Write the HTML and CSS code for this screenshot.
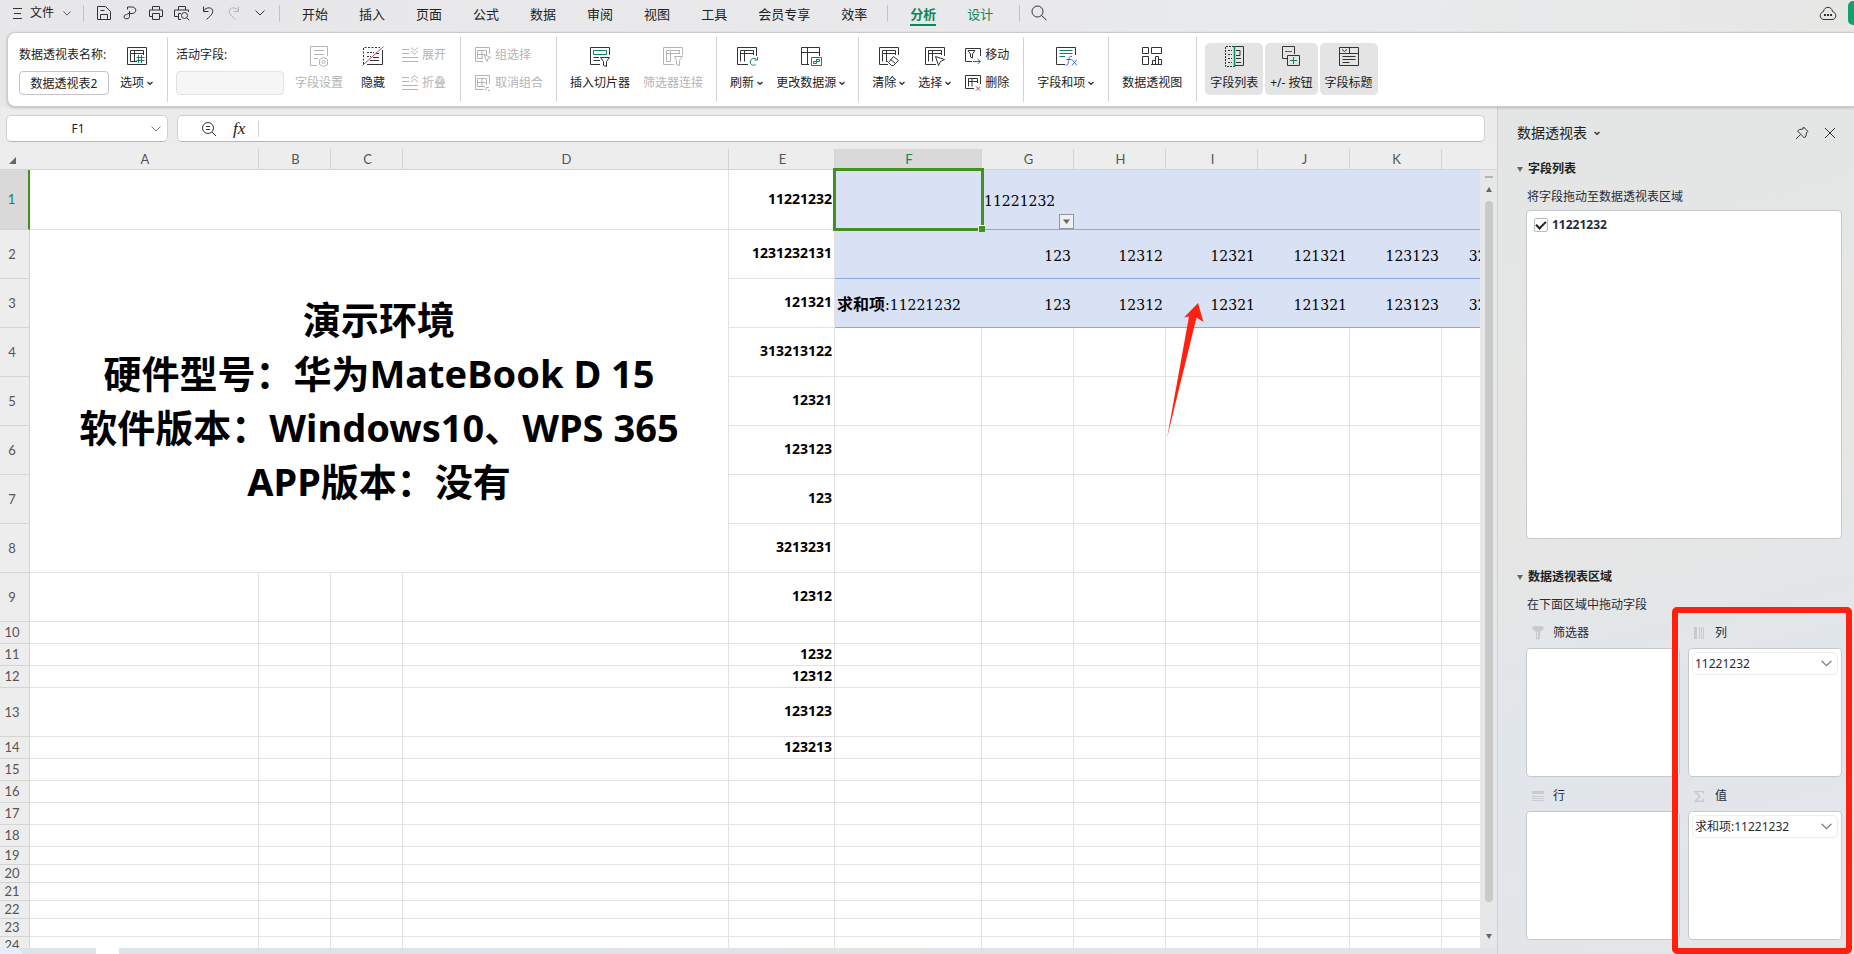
FILE: index.html
```html
<!DOCTYPE html>
<html lang="zh-CN">
<head>
<meta charset="utf-8">
<title>数据透视表</title>
<link rel="stylesheet" href="styles.css">
</head>
<body>
<svg class="defs" aria-hidden="true">
  <symbol id="chev" viewBox="0 0 6 6"><path d="M.5 2 3 4.300 5.500 2" stroke-width="1.400"/></symbol>
  <symbol id="chev-lg" viewBox="0 0 10 6"><path d="M.5.5 5 5 9.500.5"/></symbol>
  <symbol id="frame" viewBox="0 0 22 22"><path d="M12 18.500H1.500v-17h19V10M4.500 15.500v-11h13V9M4.500 7.500h13M8.500 4.500v11"/></symbol>
</svg>

<header class="menu">
  <button class="file"><svg width="10" height="12" viewBox="0 0 10 12"><path d="M0 1.500h9M1 6.500h7M0 11.500h9"/></svg><span>文件</span><svg class="chev-m" width="8" height="5" viewBox="0 0 10 6"><use href="#chev-lg"/></svg></button>
  <i class="vr"></i>
  <div class="quick">
    <button aria-label="保存"><svg width="16" height="16" viewBox="0 0 16 16"><path d="M1.500 14.500v-13h8l5 5v8zM4.500 14v-4.500h7V14M4.500 5.500h4"/></svg></button>
    <button aria-label="输出PDF"><svg width="16" height="16" viewBox="0 0 16 16"><path d="M5.500 4.500V2h4.500c5 0 5 6.500 0 6.500H5.500M7.500 6v5.500c0 3-5.500 3-5.500.5 0-2 2-2.500 3.500-2.500"/></svg></button>
    <button aria-label="打印"><svg width="16" height="16" viewBox="0 0 16 16"><path d="M4.500 5V1.500h7V5M4 11.500H1.500v-6.500h13v6.500H12M4.500 8.500h7v6h-7z"/></svg></button>
    <button aria-label="打印预览"><svg width="16" height="16" viewBox="0 0 16 16"><path d="M4.500 5V1.500h7V5M4 11.500H.5v-6.500h14V7M7 8.500H4.500v6H7"/><circle cx="10.500" cy="10.500" r="3"/><path d="m12.800 12.800 2.500 2.500"/></svg></button>
    <button aria-label="撤销"><svg width="16" height="16" viewBox="0 0 16 16"><path d="M3.500 1.500v5h5M3.500 6C6 1.500 13 2 12.800 6.500 12.500 10 9 12 6.500 14.500"/></svg></button>
    <button aria-label="恢复" class="off"><svg width="16" height="16" viewBox="0 0 16 16"><path d="M12.500 1.500v5h-5M12.500 6C10 1.500 3 2 3.200 6.500 3.500 10 7 12 9.500 14.500"/></svg></button>
    <button aria-label="更多"><svg width="10" height="6" viewBox="0 0 10 6"><use href="#chev-lg"/></svg></button>
  </div>
  <i class="vr"></i>
  <nav class="tabs">
    <a href="#">开始</a><a href="#">插入</a><a href="#">页面</a><a href="#">公式</a><a href="#">数据</a><a href="#">审阅</a><a href="#">视图</a><a href="#">工具</a><a href="#">会员专享</a><a href="#">效率</a>
  </nav>
  <i class="vr"></i>
  <nav class="tabs ctx"><a href="#" class="on">分析</a><a href="#">设计</a></nav>
  <i class="vr"></i>
  <button class="search" aria-label="搜索"><svg width="16" height="16" viewBox="0 0 16 16"><circle cx="6.500" cy="6.500" r="5.500"/><path d="m10.500 10.500 5 4.500"/></svg></button>
  <button class="cloud" aria-label="云同步"><svg width="18" height="15" viewBox="0 0 18 15"><path d="M4.500 5.500C5 0 13 0 13.500 5.500c4.500 1 4.500 8-.5 8H5c-5 0-5-7-.5-8z"/><path d="M5 9h2M8 9h2M11 9h2" stroke-width="2"/></svg></button>
  <button class="share" aria-label="分享"></button>
</header>

<section class="ribbon">
  <div class="grp roomy">
    <div class="named"><label for="ptname">数据透视表名称:</label><input id="ptname" value="数据透视表2"></div>
    <button class="big opt"><svg width="22" height="22" viewBox="0 0 22 22"><path d="M1.500 1.500h19v17h-19zM11 15.500H4.500v-11h13V9M4.500 7.500h13M8.500 4.500v11"/><path class="g" d="M12.500 9v8M15.500 9v8M10.500 11.500h8M10.500 14.500h8"/></svg><span>选项<svg class="c6"><use href="#chev"/></svg></span></button>
  </div>
  <div class="grp act roomy">
    <div class="named"><label for="active">活动字段:</label><input id="active" disabled></div>
    <button class="big off" disabled><svg width="22" height="22" viewBox="0 0 22 22"><path d="M9 19.500H2.500v-19h17V10M6 4.500h10M6 8.500h10M6 12.500h4M15.500 11.500l4 2v5l-4 2-4-2v-5z"/><circle cx="15.500" cy="16" r="1.500"/></svg><span>字段设置</span></button>
    <button class="big"><svg width="22" height="22" viewBox="0 0 22 22"><path d="M1.500 18V1.500H18" stroke-dasharray="2 1.500"/><path d="M5 6.500h7M5 10.500h4" stroke-dasharray="2 1"/><path d="M20.500 4v14.500H5M11 11.500h6M8 14.500h9M14 7.500h3"/><path class="r" d="M.5 19.500 21.500.5"/></svg><span>隐藏</span></button>
    <div class="pair">
      <button class="off" disabled><svg width="18" height="18" viewBox="0 0 18 18"><path d="M1 3.500h7M1 7.500h7M1 11.500h16M1 15.500h16M10 1.500l3.500 3 3.500-3M10 5l3.500 3L17 5"/></svg>展开</button>
      <button class="off" disabled><svg width="18" height="18" viewBox="0 0 18 18"><path d="M1 3.500h7M1 7.500h7M1 11.500h16M1 15.500h16M10 4.500l3.500-3 3.500 3M10 8l3.500-3L17 8"/></svg>折叠</button>
    </div>
  </div>
  <div class="grp">
    <div class="pair">
      <button class="off" disabled><svg width="18" height="18" viewBox="0 0 18 18"><path d="M9 15.500H1.500v-14h14V8M3.500 4.500h9V9M3.500 4.500v8H9M8 4.500v8M3.500 8.500h8M10 8.500l7 3-3 1-1 3z"/></svg>组选择</button>
      <button class="off" disabled><svg width="18" height="18" viewBox="0 0 18 18"><path d="M10 15.500H1.500v-14h14V10M3.500 4.500h9V11M3.500 4.500v8H11M8 4.500v8M3.500 8.500h9M12 16.500v-3h3M14 16.500h2"/></svg>取消组合</button>
    </div>
  </div>
  <div class="grp">
    <button class="big"><svg width="22" height="22" viewBox="0 0 22 22"><path d="M11 18.500H1.500v-17h19V9M4.500 11.500H10M4.500 14.500H11M11.500 11.500h9l-3 4v5l-3-1v-4z"/><path class="g" d="M4.500 4.500h13v4h-13z"/></svg><span>插入切片器</span></button>
    <button class="big off" disabled><svg width="22" height="22" viewBox="0 0 22 22"><path d="M12 18.500H1.500v-17h19V9M8 15.500H4.500v-11h13V8M4.500 7.500h13M8.500 4.500v11M12.500 10.500h8l-3 4v5l-3-1v-4z"/></svg><span>筛选器连接</span></button>
  </div>
  <div class="grp">
    <button class="big"><svg width="22" height="22" viewBox="0 0 22 22"><use href="#frame"/><path class="g" d="M19.500 18.500c-3 2-6-.500-5-3.500s4-3.500 6-1.500M21.500 11v3h-3"/></svg><span>刷新<svg class="c6"><use href="#chev"/></svg></span></button>
    <button class="big"><svg width="22" height="22" viewBox="0 0 22 22"><path d="M9 18.500H1.500v-17h18V10M1.500 6.500h18M7.500 1.500v17"/><path class="g" d="M11.500 11.500h10v8h-10zM13.500 17.500v-2h3v2zM16.500 15.500v-2h3v2z"/></svg><span>更改数据源<svg class="c6"><use href="#chev"/></svg></span></button>
  </div>
  <div class="grp roomy">
    <button class="big"><svg width="22" height="22" viewBox="0 0 22 22"><path d="M10 18.500H1.500v-17h19V9M4.500 15.500v-11h13V9M4.500 7.500h13M8.500 4.500v11H10M15.500 10.500l5 4-5 5h-2l-3-3zM12.500 13.500l5 4"/></svg><span>清除<svg class="c6"><use href="#chev"/></svg></span></button>
    <button class="big"><svg width="22" height="22" viewBox="0 0 22 22"><use href="#frame"/><path d="m11.500 10.500 9 3-4 2-2 4z"/></svg><span>选择<svg class="c6"><use href="#chev"/></svg></span></button>
    <div class="pair">
      <button><svg width="18" height="18" viewBox="0 0 18 18"><path d="M8 15.500H1.500v-13h15V10M4 4.500h7L8.500 8v4l-2-1V8z"/><path class="g" d="M9 15.500h7M13.500 13l3 2.500-3 2.500"/></svg>移动</button>
      <button><svg width="18" height="18" viewBox="0 0 18 18"><path d="M10 14.500H1.500v-13h15V10M4.500 12.500v-8h9V9M4.500 7.500h9M8 4.500v8"/><path class="r" d="m12 12.500 4 4M16 12.500l-4 4"/></svg>删除</button>
    </div>
  </div>
  <div class="grp roomy">
    <button class="big"><svg width="22" height="22" viewBox="0 0 22 22"><path d="M10 18.500H1.500v-17h19V9"/><path class="g" d="M4.500 4.500h13M4.500 7.500h13M4.500 10.500H10"/><path class="b" d="M17 10.500c-3-1-3 2-3.500 5s-1 4-3 3.500M11.500 13.500h5M17 13.500l5 6M22 13.500l-5 6"/></svg><span>字段和项<svg class="c6"><use href="#chev"/></svg></span></button>
  </div>
  <div class="grp roomy">
    <button class="big"><svg width="22" height="22" viewBox="0 0 22 22"><path d="M1.500 1.500h6v6h-6zM10.500 1.500h10v6h-10zM1.500 10.500h6v8h-6zM10 18.500h11M11.500 18.500v-4h3v4M14.500 14.500v-4h3v8M17.500 13.500h3v5"/></svg><span>数据透视图</span></button>
  </div>
  <div class="grp toggles">
    <button class="big"><svg width="22" height="22" viewBox="0 0 22 22"><path d="M11 .5H2.500v20H11M5 4.500h4M5 8.500h4M5 12.500h4M5 16.500h4" stroke-dasharray="2 1"/><path d="M12 .5h8.500v19H12M13 4.500h4v5h-4M13 12.500h5M13 16.500h5"/><path class="g" d="M11.500 0v21" stroke-width="1.500"/></svg><span>字段列表</span></button>
    <button class="big"><svg width="22" height="22" viewBox="0 0 22 22"><path d="M7 12.500H2.500V.5h12V8M7.500 9.500h12v10h-12z"/><path class="g" d="M5 5.500h7M10 14.500h7M13.500 11v7"/></svg><span>+/- 按钮</span></button>
    <button class="big"><svg width="22" height="22" viewBox="0 0 22 22"><path d="M1.500 1.500h19v18h-19zM1.500 7.500h19M11.500 1.500v6M4 3.500 6.500 5.500 9 3.500M4.500 10.500h13M4.500 13.500h13M4.500 16.500h7"/></svg><span>字段标题</span></button>
  </div>
</section>

<main class="work">
  <div class="left">
    <div class="fbar">
      <div class="namebox"><input aria-label="名称框" value="F1"><button aria-label="名称列表"><svg width="10" height="6" viewBox="0 0 10 6"><use href="#chev-lg"/></svg></button></div>
      <div class="formula">
        <button aria-label="查找"><svg width="16" height="16" viewBox="0 0 16 16"><circle cx="7" cy="7" r="5.500"/><path d="m11 11 4 4M5 5.500h4M5 8.500h4"/></svg></button>
        <button class="fx" aria-label="插入函数">fx</button>
        <i></i>
        <input aria-label="编辑栏">
      </div>
    </div>

    <div class="sheet">
      <div class="grid">
      <table>
        <colgroup><col class="ch"><col class="ca"><col class="cb"><col class="cb"><col class="cd"><col class="ce"><col class="cf"><col class="cg"><col class="cg"><col class="cg"><col class="cg"><col class="cg"><col class="cg"></colgroup>
        <thead><tr><th class="corner"><svg width="8" height="8" viewBox="0 0 8 8"><path d="M7 0v7H0z"/></svg></th><th>A</th><th>B</th><th>C</th><th>D</th><th>E</th><th class="sel">F</th><th>G</th><th>H</th><th>I</th><th>J</th><th>K</th><th></th></tr></thead>
        <tbody>
        <tr class="h60"><th class="selrow">1</th><td colspan="4"></td><td class="n">11221232</td><td class="p cur"><div class="cursor"></div></td><td class="p gl">11221232<button class="filter" aria-label="筛选"><svg width="7" height="5" viewBox="0 0 7 5"><path d="M0 .5h7L3.500 5z"/></svg></button></td><td class="p"></td><td class="p"></td><td class="p"></td><td class="p"></td><td class="p"></td></tr>
        <tr class="h49"><th>2</th><td colspan="4" rowspan="7" class="note">演示环境<br>硬件型号：华为MateBook D 15<br>软件版本：Windows10、WPS 365<br>APP版本：没有</td><td class="n">1231232131</td><td class="p"></td><td class="p">123</td><td class="p">12312</td><td class="p">12321</td><td class="p">121321</td><td class="p">123123</td><td class="p">3213231</td></tr>
        <tr class="h49"><th>3</th><td class="n">121321</td><td class="p gl"><span class="zh">求和项</span>:11221232</td><td class="p">123</td><td class="p">12312</td><td class="p">12321</td><td class="p">121321</td><td class="p">123123</td><td class="p">3213231</td></tr>
        <tr class="h49"><th>4</th><td class="n">313213122</td><td></td><td></td><td></td><td></td><td></td><td></td><td></td></tr>
        <tr class="h49"><th>5</th><td class="n">12321</td><td></td><td></td><td></td><td></td><td></td><td></td><td></td></tr>
        <tr class="h49"><th>6</th><td class="n">123123</td><td></td><td></td><td></td><td></td><td></td><td></td><td></td></tr>
        <tr class="h49"><th>7</th><td class="n">123</td><td></td><td></td><td></td><td></td><td></td><td></td><td></td></tr>
        <tr class="h49"><th>8</th><td class="n">3213231</td><td></td><td></td><td></td><td></td><td></td><td></td><td></td></tr>
        <tr class="h49"><th>9</th><td></td><td></td><td></td><td></td><td class="n">12312</td><td></td><td></td><td></td><td></td><td></td><td></td><td></td></tr>
        <tr class="h22"><th>10</th><td></td><td></td><td></td><td></td><td></td><td></td><td></td><td></td><td></td><td></td><td></td><td></td></tr>
        <tr class="h22"><th>11</th><td></td><td></td><td></td><td></td><td class="n">1232</td><td></td><td></td><td></td><td></td><td></td><td></td><td></td></tr>
        <tr class="h22"><th>12</th><td></td><td></td><td></td><td></td><td class="n">12312</td><td></td><td></td><td></td><td></td><td></td><td></td><td></td></tr>
        <tr class="h49"><th>13</th><td></td><td></td><td></td><td></td><td class="n">123123</td><td></td><td></td><td></td><td></td><td></td><td></td><td></td></tr>
        <tr class="h22"><th>14</th><td></td><td></td><td></td><td></td><td class="n">123213</td><td></td><td></td><td></td><td></td><td></td><td></td><td></td></tr>
        <tr class="h22"><th>15</th><td></td><td></td><td></td><td></td><td></td><td></td><td></td><td></td><td></td><td></td><td></td><td></td></tr>
        <tr class="h22"><th>16</th><td></td><td></td><td></td><td></td><td></td><td></td><td></td><td></td><td></td><td></td><td></td><td></td></tr>
        <tr class="h22"><th>17</th><td></td><td></td><td></td><td></td><td></td><td></td><td></td><td></td><td></td><td></td><td></td><td></td></tr>
        <tr class="h22"><th>18</th><td></td><td></td><td></td><td></td><td></td><td></td><td></td><td></td><td></td><td></td><td></td><td></td></tr>
        <tr class="h18"><th>19</th><td></td><td></td><td></td><td></td><td></td><td></td><td></td><td></td><td></td><td></td><td></td><td></td></tr>
        <tr class="h18"><th>20</th><td></td><td></td><td></td><td></td><td></td><td></td><td></td><td></td><td></td><td></td><td></td><td></td></tr>
        <tr class="h18"><th>21</th><td></td><td></td><td></td><td></td><td></td><td></td><td></td><td></td><td></td><td></td><td></td><td></td></tr>
        <tr class="h18"><th>22</th><td></td><td></td><td></td><td></td><td></td><td></td><td></td><td></td><td></td><td></td><td></td><td></td></tr>
        <tr class="h18"><th>23</th><td></td><td></td><td></td><td></td><td></td><td></td><td></td><td></td><td></td><td></td><td></td><td></td></tr>
        <tr class="h18"><th>24</th><td></td><td></td><td></td><td></td><td></td><td></td><td></td><td></td><td></td><td></td><td></td><td></td></tr>
        </tbody>
      </table>
      <svg class="arrow" width="40" height="140" viewBox="0 0 40 140"><path d="M32 1 37.500 20 30.500 15.500 1 136 23 14.500 18 15.500z"/></svg>
      </div>
      <div class="vscroll">
        <div class="vhead"></div>
        <i class="split"></i>
        <svg width="6" height="5" viewBox="0 0 6 5"><path d="M3 0l3 5H0z"/></svg>
        <div class="thumb"></div>
        <svg width="6" height="5" viewBox="0 0 6 5"><path d="M3 5 0 0h6z"/></svg>
      </div>
    </div>
    <div class="strip"><i class="s1"></i><i class="s2"></i></div>
  </div>

  <aside class="pane">
    <div class="ptitle"><button>数据透视表<svg class="c6"><use href="#chev"/></svg></button>
      <button class="pin" aria-label="固定"><svg width="14" height="14" viewBox="0 0 14 14"><path d="M8.500 1 13 5.500 11.500 6.500 11 10 9.500 12 2.500 5 4.500 3.500 8 3zM5.500 8.500 1 13"/></svg></button>
      <button aria-label="关闭"><svg width="12" height="12" viewBox="0 0 12 12"><path d="m1 1 10 10M11 1 1 11"/></svg></button></div>
    <h2><svg width="6" height="5" viewBox="0 0 6 5"><path d="M3 5 0 0h6z"/></svg>字段列表</h2>
    <div class="pbody grow">
      <p>将字段拖动至数据透视表区域</p>
      <div class="box list"><input type="checkbox" id="f1" checked><label for="f1">11221232</label></div>
    </div>
    <h2 class="second"><svg width="6" height="5" viewBox="0 0 6 5"><path d="M3 5 0 0h6z"/></svg>数据透视表区域</h2>
    <div class="pbody">
      <p>在下面区域中拖动字段</p>
      <div class="areas">
        <div class="area"><h3><svg width="12" height="14" viewBox="0 0 12 14"><path fill-rule="evenodd" d="M0 2c0-3 12-3 12 0 0 2-4 2-4 5v5c0 2-4 2-4 0V7C4 4 0 4 0 2zM5 6v6h1V6z"/></svg>筛选器</h3><div class="box"></div></div>
        <div class="area"><h3><svg width="12" height="12" viewBox="0 0 12 12"><path d="M0 0h3v12H0zM5 0h1v12H5zM7 0h1v12H7zM9 0h1v12H9z"/></svg>列</h3><div class="box"><button class="item">11221232<svg width="11" height="7" viewBox="0 0 10 6"><use href="#chev-lg"/></svg></button></div></div>
        <div class="area"><h3><svg width="12" height="10" viewBox="0 0 12 10"><path d="M0 0h12v3H0zM0 5h12v1H0zM0 7h12v1H0zM0 9h12v1H0z"/></svg>行</h3><div class="box"></div></div>
        <div class="area"><h3><svg width="12" height="11" viewBox="0 0 12 11"><path d="M0 0h10v3H9L8 1H3l4 4.500L3 9.500h5l1-2h1V11H0V10l5-4.500L0 1z"/></svg>值</h3><div class="box"><button class="item">求和项:11221232<svg width="11" height="7" viewBox="0 0 10 6"><use href="#chev-lg"/></svg></button></div></div>
      </div>
    </div>
    <div class="mark"></div>
  </aside>
</main>
</body>
</html>
```

FILE: styles.css
```css
* { box-sizing: border-box; }
html, body { height: 100%; }
body {
  margin: 0;
  display: flex;
  flex-direction: column;
  overflow: hidden;
  font: 12px/20px "Noto Sans", "Noto Sans CJK SC", sans-serif;
  color: #222;
  background: linear-gradient(100deg, #e7e7e9 0%, #e9e8ea 45%, #e8eaec 65%, #e6e6e3 100%);
}
button { all: unset; box-sizing: border-box; display: flex; align-items: center; cursor: pointer; }
input { font: inherit; color: inherit; border: 0; outline: 0; background: none; padding: 0; min-width: 0; }
svg { flex: none; fill: none; stroke: #333; display: block; }
.defs { position: absolute; width: 0; height: 0; }
.g { stroke: #0d8659; }
.r { stroke: #c8385a; }
.b { stroke: #3a66e0; }
.off { color: #b4b4b4; }
.off svg { stroke: #b4b4b4; }
.c6 { width: 6px; height: 6px; }

/* Menu bar */
.menu { flex: none; height: 32px; padding-left: 13px; padding-bottom: 6px; display: flex; align-items: center; }
.file { gap: 7px; }
.file .chev-m { margin-left: 2px; }
.vr { width: 1px; height: 17px; background: #c4c4c6; flex: none; }
.file + .vr { margin: 0 10px 0 12px; }
.quick { display: flex; gap: 6px; margin-right: 9px; }
.quick button { width: 20px; height: 20px; justify-content: center; }
.tabs { display: flex; gap: 31px; padding: 1px 20px 0 22px; font-size: 13px; }
.tabs a { color: #222; text-decoration: none; }
.tabs.ctx { padding: 1px 26px 0 22px; }
.tabs.ctx a { color: #0d8659; }
.tabs .on { font-weight: 700; box-shadow: 0 2px #0d8659; }
.search { margin-left: 11px; }
.cloud { margin-left: auto; }
.share { width: 6px; height: 24px; margin-left: 11px; border-radius: 5px 0 0 5px; background: #12a06c; }

/* Ribbon */
.ribbon {
  flex: none; display: flex; height: 75px; margin-left: 7px; padding: 4px 0 4px;
  background: #fff; border: 1px solid #c9cacb; border-right: 0; border-radius: 8px 0 0 8px;
  box-shadow: 0 1px 3px #0003; position: relative; z-index: 2;
}
.grp { display: flex; gap: 13px; padding: 6px 13px 0; border-right: 1px solid #d4d4d4; }
.grp.roomy { padding-right: 14px; }
.grp:first-child { gap: 11px; padding-left: 11px; }
.grp.act { gap: 18px; padding-left: 8px; }
.act .named { margin-right: -7px; }
.act .pair { margin-left: -2px; }
.named { display: flex; flex-direction: column; gap: 6px; padding-top: 2px; white-space: nowrap; }
.named input { width: 90px; height: 24px; border: 1px solid #c3c3c6; border-radius: 4px; text-align: center; }
.act .named input { width: 108px; background: #f6f6f6; border-color: #e2e2e2; }
.big { flex-direction: column; height: 52px; padding-top: 3px; gap: 5px; white-space: nowrap; }
.big span { display: flex; align-items: center; gap: 3px; }
.pair { display: flex; flex-direction: column; gap: 8px; padding-top: 2px; white-space: nowrap; }
.pair button { height: 20px; gap: 3px; }
.toggles { gap: 2px; border: 0; padding-left: 8px; }
.toggles .big { padding: 3px 5px 0; background: #e4e4e4; border-radius: 5px; }

/* Work area */
.work { flex: 1; min-height: 0; display: flex; }
.left { flex: 1; min-width: 0; display: flex; flex-direction: column; background: #ececec; }
.fbar { flex: none; display: flex; gap: 9px; padding: 8px 12px 7px 6px; }
.namebox, .formula { display: flex; align-items: center; height: 27px; background: #fff; border: 1px solid #cfd0d0; border-bottom-color: #b4b8b6; border-radius: 5px; }
.namebox { width: 162px; padding-right: 6px; }
.namebox input { flex: 1; text-align: center; padding-right: 2px; }
.formula { flex: 1; padding-left: 23px; }
.formula .fx { font: italic 17px/20px "Liberation Serif", serif; margin: 0 13px 0 16px; }
.formula i { width: 1px; height: 16px; background: #d0d0d0; }
.formula input { flex: 1; padding: 0 8px; }

/* Sheet */
.sheet { flex: 1; min-height: 0; display: flex; }
.grid { flex: 1; min-width: 0; overflow: hidden; position: relative; background: #fff; }
table { table-layout: fixed; width: 1534px; border-collapse: separate; border-spacing: 0; }
.ch { width: 30px; } .ca { width: 229px; } .cb { width: 72px; } .cd { width: 326px; }
.ce { width: 106px; } .cf { width: 147px; } .cg { width: 92px; }
th { font: 400 13px/16px Lato, sans-serif; color: #555; background: #ededed; padding: 0; border: solid #d4d4d4; border-width: 0 1px 1px 0; }
thead th { height: 21px; padding-left: 2px; }
thead .sel { background: #d9d9d9; color: #0d8659; }
.corner { border-right: 0; }
.corner svg { margin: 4px 0 0 7px; }
tbody th { padding: 0 5px 1px 0; }
tbody .selrow { background: #d9d9d9; color: #0d8659; border-right: 2px solid #43901e; }
td { padding: 0 2px; border: solid #e2e2e2; border-width: 0 1px 1px 0; line-height: 16px; }
.h60 { height: 60px; } .h49 { height: 49px; } .h22 { height: 22px; } .h18 { height: 18px; }
.n { font-size: 14px; font-weight: 700; text-align: right; color: #000; padding-bottom: 2px; }
.p { background: #d9e1f4; border-right: 0; border-bottom-color: #8fa6df; color: #000; text-align: right; font: 400 14px/20px "DejaVu Serif", "Noto Sans CJK SC", serif; padding: 3px 3px 0 2px; white-space: nowrap; }
.zh { font-size: 16px; font-weight: 700; }
.gl { text-align: left; position: relative; }
.note { text-align: center; color: #000; font-size: 38px; line-height: 54px; font-weight: 700; padding-bottom: 3px; }
.cur { position: relative; z-index: 1; }
.cursor { position: absolute; inset: -2px; border: 3px solid #43901e; }
.cursor::after { content: ""; position: absolute; right: -4px; bottom: -4px; width: 6px; height: 6px; background: #43901e; border: solid #fff; border-width: 1px 0 0 1px; }
.filter { position: absolute; right: 0; bottom: 0; width: 15px; height: 15px; justify-content: center; background: #f0f0f0; border: 1px solid #8e95a5; }
.corner path, .filter path, .vscroll path, h2 path { fill: #666; stroke: none; }
.arrow { position: absolute; left: 1166px; top: 153px; }
.arrow path { fill: #ff2010; stroke: none; }
.vscroll { width: 17px; display: flex; flex-direction: column; align-items: center; background: #e6e7e8; padding-bottom: 9px; }
.vhead { align-self: stretch; height: 21px; background: #ededed; border-bottom: 1px solid #d4d4d4; }
.split { width: 8px; height: 2px; margin: 6px 0 9px; background: #b4b6b6; }
.thumb { flex: 1; width: 8px; margin: 9px 0 32px; border-radius: 4px; background: #c8caca; }
.strip { height: 6px; display: flex; background: linear-gradient(90deg, #dde3e9 20%, #e2e3e4); }
.s1 { width: 22px; margin-right: 74px; border-radius: 0 6px 0 0; background: #e4eefc; }
.s2 { width: 23px; background: #fff; }

/* Task pane */
.pane {
  flex: none; width: 357px; position: relative; display: flex; flex-direction: column;
  padding: 0 12px 14px 19px; border-left: 1px solid #cfd0d1;
  background: linear-gradient(165deg, #e3e6e6 0%, #e6e6e4 45%, #e1e6ec 70%, #e4e5e6 100%);
}
.ptitle { height: 52px; display: flex; align-items: center; font-size: 14px; }
.ptitle button:first-child { gap: 7px; }
.pin { margin: 0 15px 0 auto; }
.ptitle button:last-child { margin-right: 6px; }
h2 { display: flex; align-items: center; gap: 5px; margin: 0; font-size: 12px; line-height: 20px; }
.second { margin-top: 28px; }
.pbody { padding-left: 9px; color: #262b3a; }
.grow { flex: 1; display: flex; flex-direction: column; }
.pbody p { margin: 8px 0 3px; padding-left: 1px; }
.box { background: #fff; border: 1px solid #c6c9cc; border-radius: 4px; padding: 3px; }
.list { flex: 1; display: flex; align-items: flex-start; gap: 4px; padding: 7px; line-height: 14px; font-weight: 700; }
.list input { appearance: none; width: 14px; height: 14px; margin: 0; border: 1px solid #b8bac4; border-radius: 2px; display: grid; place-items: center; }
.list input:checked::after { content: ""; width: 8px; height: 4px; border: solid #222; border-width: 0 0 2px 2px; rotate: -45deg; translate: 0 -1px; }
.areas { display: grid; grid-template-columns: 1fr 1fr; gap: 9px 8px; margin-top: 8px; }
.area h3 { display: flex; align-items: center; gap: 9px; margin: 0 0 5px 6px; font-size: 12px; line-height: 20px; font-weight: 400; }
.area h3 path { fill: #c8cacc; stroke: none; }
.area .box { height: 129px; }
.item { width: 100%; height: 23px; justify-content: space-between; padding: 0 5px 0 2px; border: 1px solid #ebebf2; border-radius: 5px; }
.item svg, .namebox svg { stroke: #777; }
.mark { position: absolute; right: 2px; top: 500px; bottom: 0; width: 180px; border: 6px solid #ff2010; border-radius: 5px; }
```
